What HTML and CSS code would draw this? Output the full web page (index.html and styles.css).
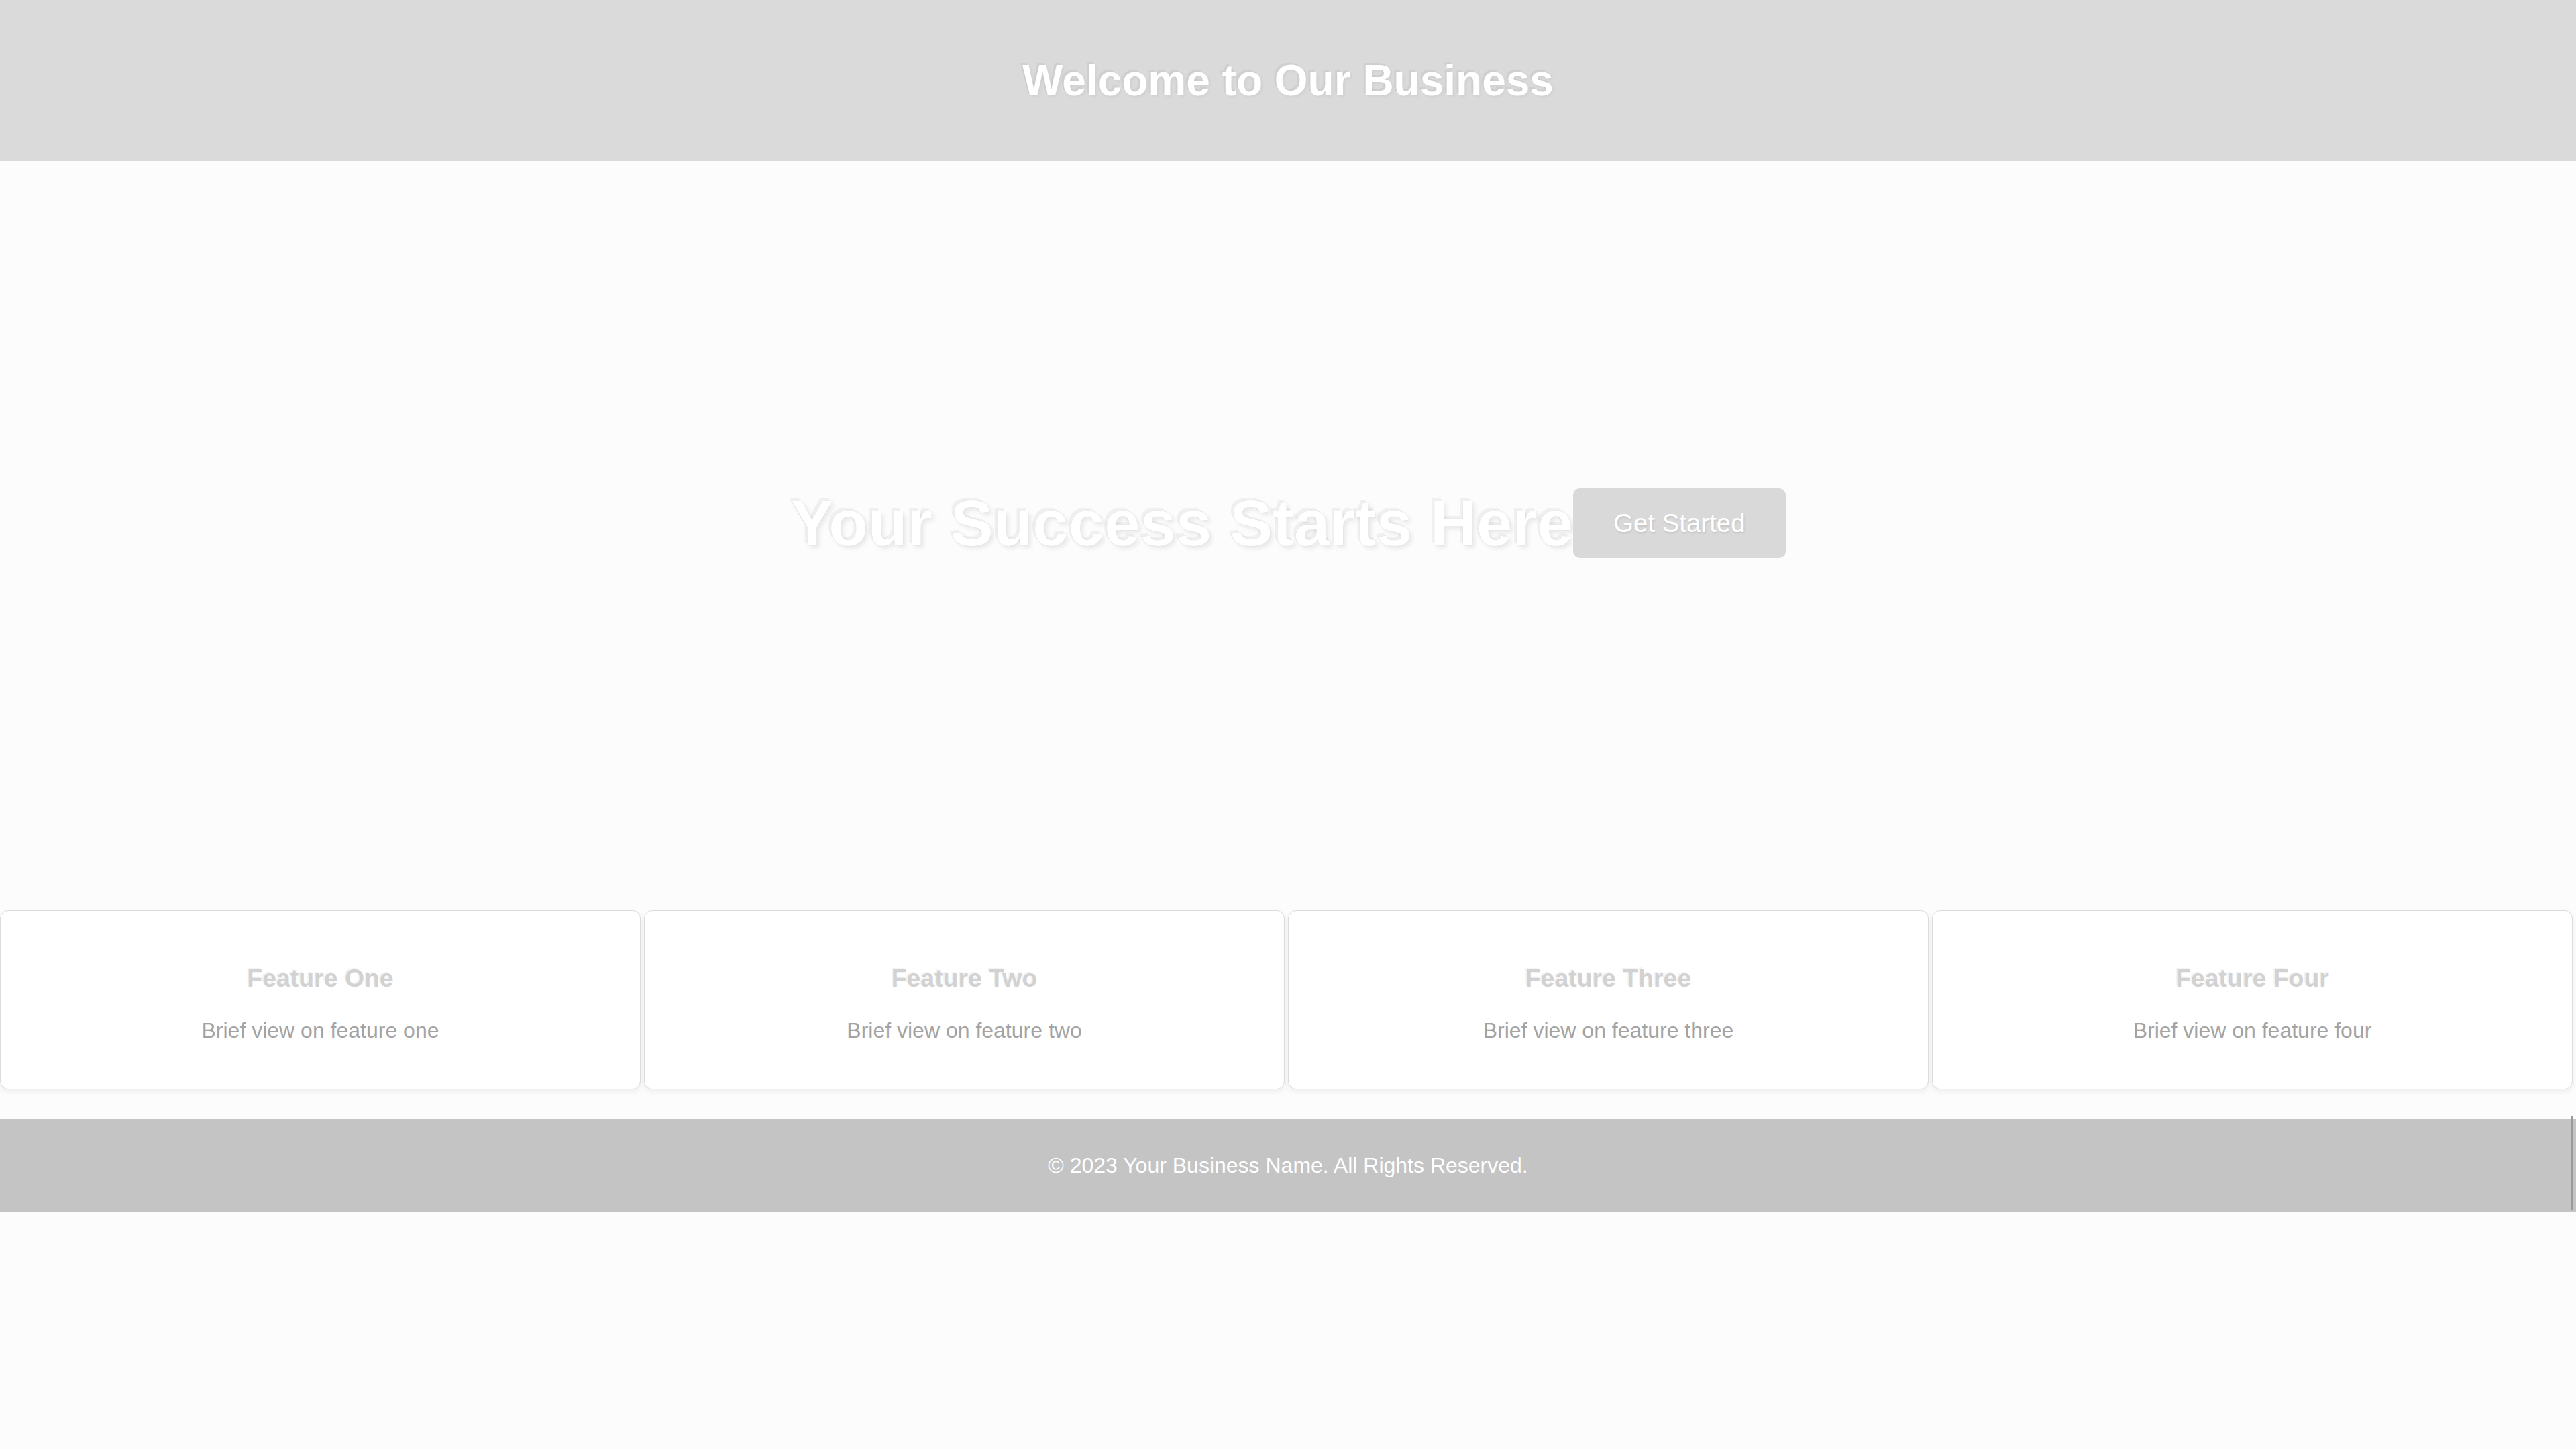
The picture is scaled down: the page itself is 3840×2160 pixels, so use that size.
FILE: index.html
```html
<!DOCTYPE html>
<html lang="en">
<head>
<meta charset="utf-8">
<title>Welcome to Our Business</title>
<link rel="stylesheet" href="styles.css">
</head>
<body>
<header class="site-header">
  <h1 class="site-title">Welcome to Our Business</h1>
</header>
<section class="hero">
  <h2 class="hero-title">Your Success Starts Here</h2>
  <a class="hero-btn" href="#">Get Started</a>
</section>
<section class="features">
  <div class="card">
    <h3 class="card-title">Feature One</h3>
    <p class="card-text">Brief view on feature one</p>
  </div>
  <div class="card">
    <h3 class="card-title">Feature Two</h3>
    <p class="card-text">Brief view on feature two</p>
  </div>
  <div class="card">
    <h3 class="card-title">Feature Three</h3>
    <p class="card-text">Brief view on feature three</p>
  </div>
  <div class="card">
    <h3 class="card-title">Feature Four</h3>
    <p class="card-text">Brief view on feature four</p>
  </div>
</section>
<footer class="site-footer">
  <p class="footer-text">&copy; 2023 Your Business Name. All Rights Reserved.</p>
</footer>
</body>
</html>
```
FILE: styles.css
```css
html, body {
  margin: 0;
  padding: 0;
}

body {
  background: #fcfcfc;
  font-family: "Liberation Sans", Arial, sans-serif;
  font-size: 32px;
  color: #333;
}

.site-header {
  background: #dadada;
  padding: 40px;
  text-align: center;
}

.site-title {
  margin: 42.88px 0;
  font-size: 64px;
  font-weight: bold;
  color: #ffffff;
  text-shadow: -3px -3px 0 rgba(150, 150, 150, 0.15), 2px 2px 4px rgba(0, 0, 0, 0.05);
}

.hero {
  height: 1080px;
  display: flex;
  justify-content: center;
  align-items: center;
}

.hero-title {
  margin: 80px 0;
  font-size: 96px;
  font-weight: bold;
  color: #ffffff;
  text-shadow: -4px -4px 0 rgba(170, 170, 170, 0.14), 0 0 1px rgba(120, 120, 120, 0.35), 4px 4px 6px rgba(0, 0, 0, 0.08);
}

.hero-btn {
  display: inline-block;
  padding: 30px 60px;
  background: #d9d9d9;
  color: #ffffff;
  font-size: 38.4px;
  text-decoration: none;
  border-radius: 10px;
  text-shadow: 1px 2px 3px rgba(0, 0, 0, 0.1);
}

.features {
  display: flex;
  gap: 5px;
  padding: 37px 5px 44px 0;
}

.card {
  flex: 1;
  background: #ffffff;
  border: 1px solid #dcdcdc;
  border-radius: 12px;
  padding: 42px 20px 36px;
  text-align: center;
  box-shadow: 0 4px 10px rgba(0, 0, 0, 0.06);
}

.card-title {
  margin: 37.44px 0;
  font-size: 37.44px;
  font-weight: bold;
  color: #d2d2d2;
  text-shadow: -2px -2px 0 rgba(170, 170, 170, 0.15);
}

.card-text {
  margin: 32px 0;
  font-size: 32px;
  color: #a3a3a3;
}

.site-footer {
  position: relative;
  background: #c4c4c4;
  padding: 19px;
  text-align: center;
}

.site-footer::after {
  content: "";
  position: absolute;
  right: 5px;
  top: -4px;
  bottom: 4px;
  width: 2px;
  background: #9a9a9a;
}

.footer-text {
  margin: 32px 0;
  font-size: 32px;
  color: #ffffff;
}
```
